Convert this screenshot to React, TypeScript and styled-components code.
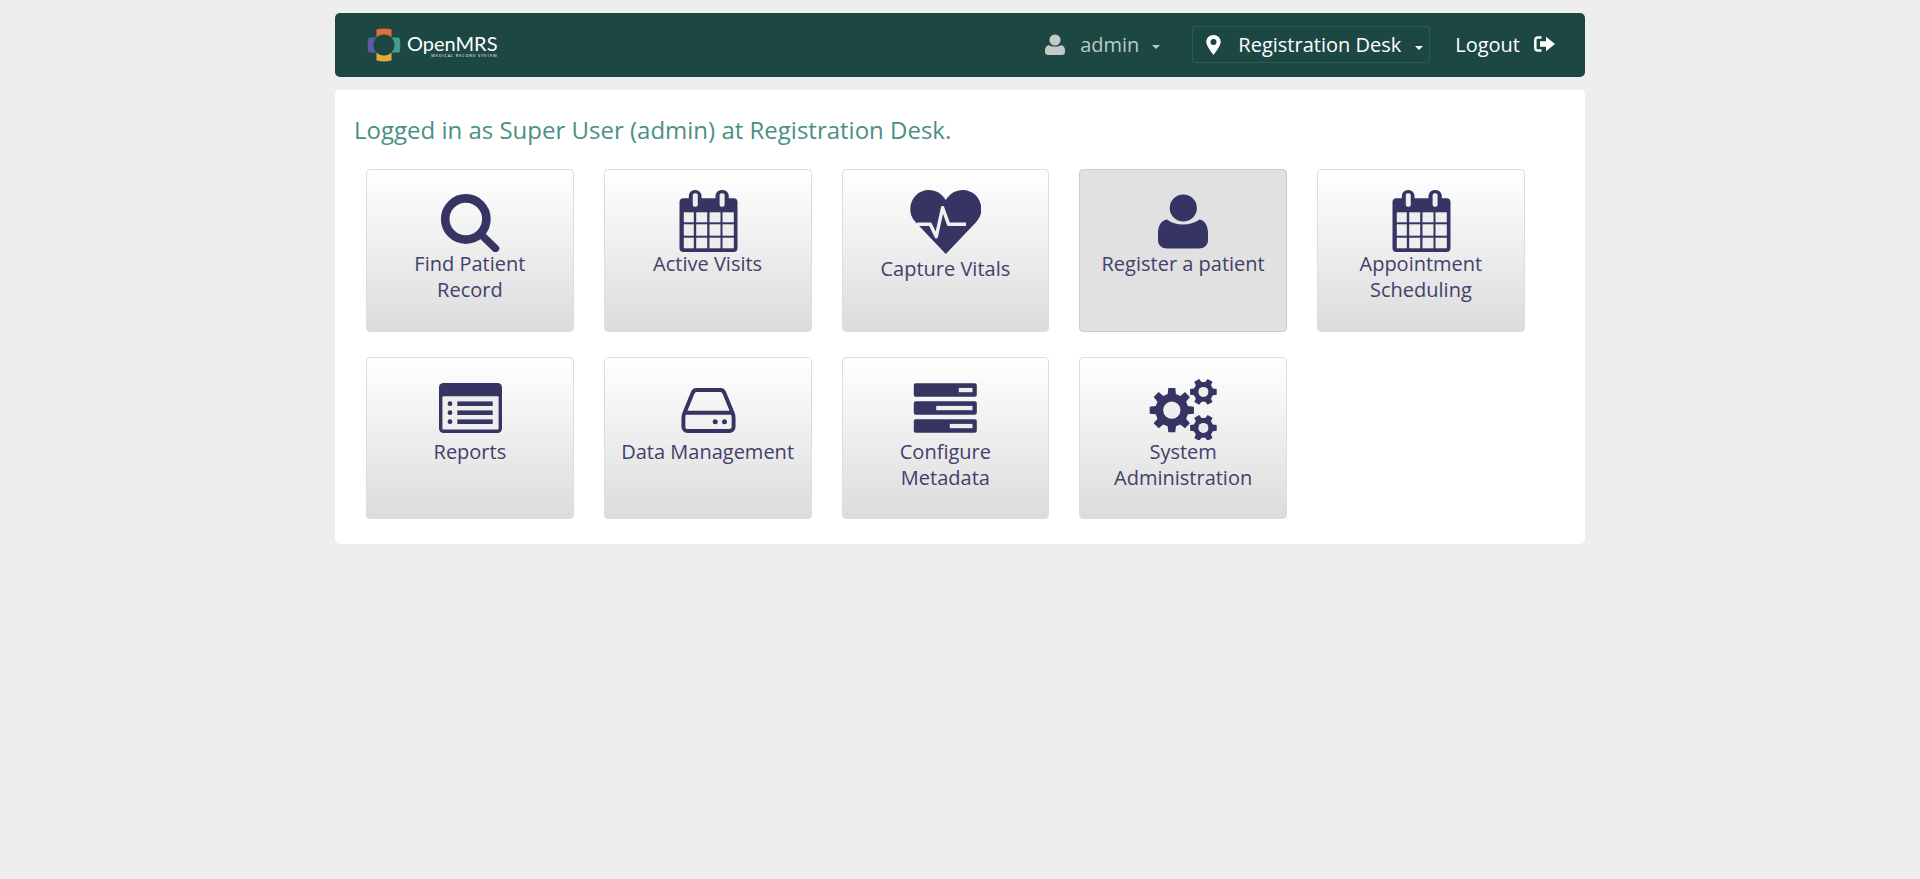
import React from "react";
import styled, { createGlobalStyle } from "styled-components";

const GlobalStyle = createGlobalStyle`
  html, body { margin: 0; padding: 0; background: #eeeeee; }
  body { font-family: "Open Sans", "Liberation Sans", sans-serif; min-height: 879px; }
`;

const Page = styled.div`
  width: 1250px;
  margin: 0 auto;
  padding-top: 13px;
`;

const Header = styled.header`
  height: 64px;
  box-sizing: border-box;
  background: #1c4743;
  border-radius: 5px;
  display: flex;
  align-items: center;
  justify-content: space-between;
  padding: 0 30px 0 32px;
`;

const Logo = styled.div`
  display: flex;
  align-items: center;
  gap: 6px;
`;

const LogoWords = styled.div`
  display: flex;
  flex-direction: column;
  align-items: flex-end;
  color: #ffffff;
`;

const LogoName = styled.span`
  font-family: "Lato", sans-serif;
  font-weight: 400;
  font-size: 20px;
  line-height: 20px;
`;

const LogoTag = styled.span`
  font-size: 4px;
  line-height: 5px;
  letter-spacing: 0.75px;
  font-weight: 600;
  color: #cfdbd8;
  text-transform: uppercase;
`;

const Nav = styled.nav`
  display: flex;
  align-items: center;
`;

const UserMenu = styled.div`
  display: flex;
  align-items: center;
  color: #b9cbc6;
  font-size: 20px;
  margin-right: 32px;
  padding-bottom: 2px;
`;

const LocationMenu = styled.div`
  display: flex;
  align-items: center;
  height: 37px;
  box-sizing: border-box;
  border: 1px solid #2a5c56;
  border-radius: 3px;
  padding: 0 6px 0 13px;
  color: #ffffff;
  font-size: 20px;
  margin-right: 25px;
  margin-bottom: 1px;
`;

const LogoutLink = styled.a`
  display: flex;
  align-items: center;
  gap: 14px;
  color: #ffffff;
  font-size: 20px;
  padding-bottom: 2px;
`;

const Label = styled.span<{ $left: number }>`
  margin-left: ${(p) => p.$left}px;
`;

const Caret = styled.span<{ $color: string; $gap: number }>`
  width: 0;
  height: 0;
  margin-left: ${(p) => p.$gap}px;
  margin-top: 6px;
  border-left: 4.5px solid transparent;
  border-right: 4.5px solid transparent;
  border-top: 4px solid ${(p) => p.$color};
`;

const Main = styled.main`
  margin-top: 13px;
  background: #ffffff;
  border-radius: 5px;
  padding: 24px 31px 25px 19px;
  height: 454px;
  box-sizing: border-box;
`;

const Greeting = styled.h1`
  margin: 0 0 24px;
  font-size: 24px;
  line-height: 31px;
  font-weight: 400;
  color: #4a9084;
`;

const TileGrid = styled.div`
  display: grid;
  grid-template-columns: repeat(5, 207.75px);
  grid-auto-rows: 162.5px;
  column-gap: 30px;
  row-gap: 25px;
  margin-left: 12px;
`;

const Tile = styled.a<{ $active?: boolean }>`
  box-sizing: border-box;
  display: flex;
  flex-direction: column;
  align-items: center;
  padding: 18px 13px 0;
  border: 1px solid ${(p) => (p.$active ? "#cccccc" : "#dddddd")};
  border-radius: 4px;
  background: ${(p) => (p.$active ? "#e1e1e1" : "linear-gradient(to bottom, #ffffff, #dcdcdc)")};
  color: #42406b;
  text-align: center;
  font-size: 20px;
  line-height: 26px;
`;

const IconSlot = styled.svg<{ $tall?: boolean }>`
  display: block;
  flex: none;
  width: 72px;
  height: ${(p) => (p.$tall ? 68 : 64)}px;
  margin-bottom: ${(p) => (p.$tall ? 0 : -1)}px;
  color: #363463;
`;

const CELL = "#eeeeee";

function gearPath(cx: number, cy: number, outer: number, inner: number, teeth: number, start = 0) {
  const pts: string[] = [];
  const step = (Math.PI * 2) / teeth;
  for (let i = 0; i < teeth; i++) {
    const a = start + i * step;
    const seq: [number, number][] = [
      [inner, a - step * 0.32],
      [outer, a - step * 0.2],
      [outer, a + step * 0.2],
      [inner, a + step * 0.32],
    ];
    seq.forEach(([r, t]) => pts.push(`${(cx + r * Math.cos(t)).toFixed(2)} ${(cy + r * Math.sin(t)).toFixed(2)}`));
  }
  return `M${pts.join(" L")} Z`;
}

const SearchIcon = () => (
  <IconSlot viewBox="0 0 72 64">
    <circle cx="31.8" cy="31" r="20.6" fill="none" stroke="currentColor" strokeWidth="8.6" />
    <line x1="47" y1="46.5" x2="61.5" y2="60.5" stroke="currentColor" strokeWidth="7.4" strokeLinecap="round" />
  </IconSlot>
);

const CalendarIcon = () => {
  const xs: [number, number][] = [[11.8, 21.8], [24.2, 35.2], [37.5, 48.5], [50.5, 61.8]];
  const ys: [number, number][] = [[24.3, 34.3], [36.3, 47.7], [49.7, 60.3]];
  return (
    <IconSlot viewBox="0 0 72 64">
      <rect x="7.5" y="10.3" width="58" height="53.7" rx="4" fill="currentColor" />
      <rect x="16.8" y="2" width="12.7" height="20" rx="6" fill="currentColor" />
      <rect x="43.5" y="2" width="13.3" height="20" rx="6" fill="currentColor" />
      <rect x="20.8" y="5.3" width="5" height="13.4" rx="2" fill={CELL} />
      <rect x="47.6" y="5.3" width="5" height="13.4" rx="2" fill={CELL} />
      {ys.map(([y0, y1]) =>
        xs.map(([x0, x1]) => (
          <rect key={`${x0}-${y0}`} x={x0} y={y0} width={x1 - x0} height={y1 - y0} fill={CELL} />
        ))
      )}
    </IconSlot>
  );
};

const HeartIcon = () => (
  <IconSlot $tall viewBox="-0.8 -1 72 68">
    <path
      d="M36 65 L6.5 34 C2.5 29.5 .5 26 .5 20 C.5 9 9 1 19 1 C26 1 32 4.5 36 11 C40 4.5 46 1 53 1 C63 1 71.5 9 71.5 20 C71.5 26 69.5 29.5 65.5 34 Z"
      fill="currentColor"
    />
    <polyline
      points="7.2,35.3 20.5,35.3 26.5,47.7 32.8,18.7 38.8,35.3 56.2,35.3"
      fill="none"
      stroke="#f0f0f0"
      strokeWidth="3.4"
      strokeLinejoin="round"
    />
  </IconSlot>
);

const PersonIcon = () => (
  <IconSlot viewBox="0 0 72 64">
    <circle cx="36.3" cy="20" r="13.6" fill="currentColor" />
    <path
      d="M20 31.5 C24 35 30 36.6 36 36.6 C42 36.6 48 35 52.5 31.5 C58 32.5 61 38 61 45 L61 52 C61 57.5 57 60.5 52 60.5 L20 60.5 C15 60.5 11 57.5 11 52 L11 45 C11 38 14 32.5 20 31.5 Z"
      fill="currentColor"
    />
  </IconSlot>
);

const ReportsIcon = () => (
  <IconSlot viewBox="0 0 72 64">
    <rect x="5" y="7" width="63" height="50" rx="4.5" fill="currentColor" />
    <rect x="8.4" y="20.2" width="56.2" height="33.4" rx="1" fill={CELL} />
    {[27.7, 36.7, 45.7].map((y) => (
      <React.Fragment key={y}>
        <circle cx="16" cy={y} r="2.4" fill="currentColor" />
        <rect x="23.3" y={y - 2.3} width="35.4" height="4.6" fill="currentColor" />
      </React.Fragment>
    ))}
  </IconSlot>
);

const DriveIcon = () => (
  <IconSlot viewBox="0 0 72 64">
    <path
      d="M24.5 14 H48.5 C50.5 14 51.7 15 52.4 17 L60.8 37.5 C61.4 39 61.6 40 61.6 42 V51 C61.6 53.5 59.7 55 57.5 55 H15.5 C13.3 55 11.4 53.5 11.4 51 V42 C11.4 40 11.6 39 12.2 37.5 L20.6 17 C21.3 15 22.5 14 24.5 14 Z M12 36.8 H61"
      fill="none"
      stroke="currentColor"
      strokeWidth="3.9"
    />
    <circle cx="43.2" cy="45.7" r="2.5" fill="currentColor" />
    <circle cx="52.5" cy="45.7" r="2.5" fill="currentColor" />
  </IconSlot>
);

const MetadataIcon = () => (
  <IconSlot viewBox="0 0 72 64">
    {[
      { y: 7.3, x: 49.8 },
      { y: 25.3, x: 27.2 },
      { y: 43.3, x: 40.8 },
    ].map(({ y, x }) => (
      <React.Fragment key={y}>
        <rect x="4.8" y={y} width="63" height="13.4" rx="2" fill="currentColor" />
        <rect x={x} y={y + 4.6} width={63.5 - x} height="4.3" fill={CELL} />
      </React.Fragment>
    ))}
  </IconSlot>
);

const GearsIcon = () => (
  <IconSlot viewBox="0 0 72 64">
    <path d={gearPath(24.8, 34.2, 22.4, 16.6, 8, -Math.PI / 2)} fill="currentColor" />
    <circle cx="24.8" cy="34.2" r="8.6" fill={CELL} />
    <path d={gearPath(56.4, 15.9, 13.6, 10, 6, 0)} fill="currentColor" />
    <circle cx="56.4" cy="15.9" r="5" fill={CELL} />
    <path d={gearPath(56.4, 51.9, 13.6, 10, 6, 0)} fill="currentColor" />
    <circle cx="56.4" cy="51.9" r="5" fill="#e9e9e9" />
  </IconSlot>
);

const LogoMark = () => (
  <svg width="34" height="34" viewBox="0 0 34 34">
    {[
      { c: "#e0703a", r: 0 },
      { c: "#459c8b", r: 90 },
      { c: "#e8a93a", r: 180 },
      { c: "#5b5ba6", r: 270 },
    ].map(({ c, r }) => (
      <path
        key={r}
        d="M9.5 1.6 Q17 -0.4 24.5 1.6 L24.5 9.5 A10.6 10.6 0 0 0 9.5 9.5 Z"
        fill={c}
        transform={`rotate(${r} 17 17)`}
      />
    ))}
  </svg>
);

const SmallPerson = () => (
  <svg width="20" height="21" viewBox="0 0 20 21" fill="#c3cbc8">
    <circle cx="10" cy="6" r="5.6" />
    <path d="M4 11 C6 13 14 13 16 11 C18.5 11.5 20 13.5 20 16 V18 C20 20 18.6 21 17 21 H3 C1.4 21 0 20 0 18 V16 C0 13.5 1.5 11.5 4 11 Z" />
  </svg>
);

const Pin = () => (
  <svg width="15" height="20" viewBox="0 0 15 20">
    <path
      fillRule="evenodd"
      fill="#ffffff"
      d="M7.5 0 C3.3 0 .3 3 .3 6.9 C.3 11 5.4 16.5 7.5 20 C9.6 16.5 14.7 11 14.7 6.9 C14.7 3 11.7 0 7.5 0 Z M7.5 4 A3 3 0 1 1 7.5 10 A3 3 0 1 1 7.5 4 Z"
    />
  </svg>
);

const LogoutIcon = () => (
  <svg width="21" height="16" viewBox="0 0 21 16">
    <path
      d="M7.5 1.5 H3.8 C2.3 1.5 1.3 2.5 1.3 4 V12 C1.3 13.5 2.3 14.5 3.8 14.5 H7.5"
      fill="none"
      stroke="#ffffff"
      strokeWidth="2.5"
    />
    <path d="M6 5.3 H12 V0.8 L21 8 L12 15.2 V10.7 H6 Z" fill="#ffffff" />
  </svg>
);

const tiles = [
  { label: "Find Patient Record", icon: <SearchIcon /> },
  { label: "Active Visits", icon: <CalendarIcon /> },
  { label: "Capture Vitals", icon: <HeartIcon /> },
  { label: "Register a patient", icon: <PersonIcon />, active: true },
  { label: "Appointment Scheduling", icon: <CalendarIcon /> },
  { label: "Reports", icon: <ReportsIcon /> },
  { label: "Data Management", icon: <DriveIcon /> },
  { label: "Configure Metadata", icon: <MetadataIcon /> },
  { label: "System Administration", icon: <GearsIcon /> },
];

export default function App() {
  return (
    <>
      <GlobalStyle />
      <Page>
        <Header>
          <Logo>
            <LogoMark />
            <LogoWords>
              <LogoName>OpenMRS</LogoName>
              <LogoTag>Medical Record System</LogoTag>
            </LogoWords>
          </Logo>
          <Nav>
            <UserMenu>
              <SmallPerson />
              <Label $left={15}>admin</Label>
              <Caret $color="#b9cbc6" $gap={13} />
            </UserMenu>
            <LocationMenu>
              <Pin />
              <Label $left={17}>Registration Desk</Label>
              <Caret $color="#ffffff" $gap={14} />
            </LocationMenu>
            <LogoutLink>
              Logout
              <LogoutIcon />
            </LogoutLink>
          </Nav>
        </Header>
        <Main>
          <Greeting>Logged in as Super User (admin) at Registration Desk.</Greeting>
          <TileGrid>
            {tiles.map((t) => (
              <Tile key={t.label} $active={t.active}>
                {t.icon}
                {t.label}
              </Tile>
            ))}
          </TileGrid>
        </Main>
      </Page>
    </>
  );
}
